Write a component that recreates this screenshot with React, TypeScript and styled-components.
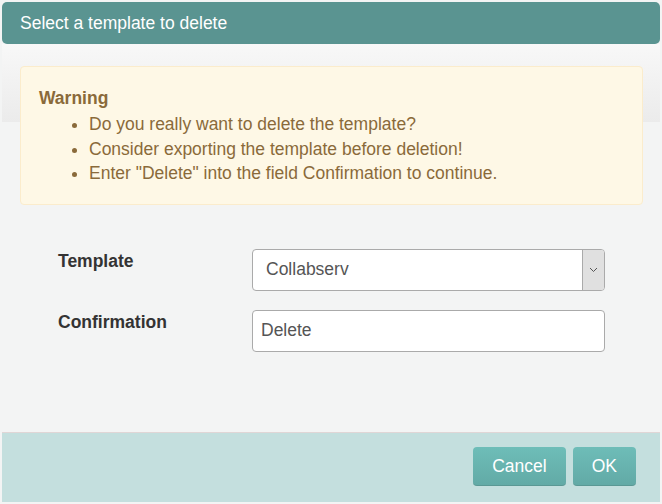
import React from "react";
import styled, { createGlobalStyle } from "styled-components";

const GlobalStyle = createGlobalStyle`
  html, body {
    margin: 0;
    padding: 0;
    background: #f3f4f4;
    font-family: "Liberation Sans", Arial, sans-serif;
  }
`;

const Dialog = styled.div`
  width: 658px;
  padding: 2px;
  display: flex;
  flex-direction: column;
`;

const Header = styled.div`
  height: 42px;
  background: #5a9491;
  border-radius: 5px;
  color: #fff;
  font-size: 17.5px;
  display: flex;
  align-items: center;
  padding-left: 18px;
`;

const Body = styled.div`
  height: 388px;
  box-sizing: border-box;
  padding: 22px 17px 0 18px;
  background: linear-gradient(#f8f8f8, #ebebeb) 0 0 / 100% 78px no-repeat,
    #f3f4f4;
`;

const Warning = styled.div`
  background: #fef8e6;
  border: 1px solid #fbeccc;
  border-radius: 4px;
  padding: 19px 18px 18px 18px;
  color: #8a6a3a;
  font-size: 17.5px;
`;

const WarningTitle = styled.div`
  font-weight: bold;
  line-height: 24px;
`;

const WarningList = styled.ul`
  margin: 2px 0 0 0;
  padding-left: 50px;
  line-height: 24.5px;
`;

const Form = styled.div`
  display: grid;
  grid-template-columns: 194px 353px;
  row-gap: 19px;
  margin: 44px 0 0 38px;
`;

const Label = styled.label`
  font-weight: bold;
  font-size: 17.5px;
  color: #333;
  line-height: 20px;
  padding-top: 2px;
`;

const Field = styled.div`
  height: 42px;
  box-sizing: border-box;
  border: 1px solid #aaa;
  border-radius: 4px;
  background: #fff;
  display: flex;
  align-items: center;
  overflow: hidden;
  font-size: 17.5px;
  color: #555;
`;

const FieldText = styled.span<{ $indent: number }>`
  flex: 1;
  padding-left: ${(p) => p.$indent}px;
`;

const Arrow = styled.div`
  width: 21px;
  align-self: stretch;
  background: #e0e0e0;
  border-left: 1px solid #aaa;
  display: flex;
  align-items: center;
  justify-content: center;
`;

const Footer = styled.div`
  height: 70px;
  box-sizing: border-box;
  border-top: 1px solid #e0d6d6;
  background: #c4dfde;
  display: flex;
  justify-content: flex-end;
  align-items: flex-start;
  gap: 7px;
  padding: 14px 24px 0 0;
`;

const Button = styled.button`
  height: 39px;
  padding: 0 19px;
  border: none;
  border-bottom: 1px solid #5a9894;
  border-radius: 4px;
  background: linear-gradient(#6ebdb8, #62aaa6);
  color: #fff;
  font-family: inherit;
  font-size: 17.5px;
  cursor: pointer;
`;

export default function App() {
  return (
    <>
      <GlobalStyle />
      <Dialog>
        <Header>Select a template to delete</Header>
        <Body>
          <Warning>
            <WarningTitle>Warning</WarningTitle>
            <WarningList>
              <li>Do you really want to delete the template?</li>
              <li>Consider exporting the template before deletion!</li>
              <li>Enter "Delete" into the field Confirmation to continue.</li>
            </WarningList>
          </Warning>
          <Form>
            <Label>Template</Label>
            <Field>
              <FieldText $indent={13}>Collabserv</FieldText>
              <Arrow>
                <svg width="9" height="6" viewBox="0 0 9 6">
                  <path d="M1 1l3.5 3.5L8 1" fill="none" stroke="#555" strokeWidth="1" />
                </svg>
              </Arrow>
            </Field>
            <Label>Confirmation</Label>
            <Field>
              <FieldText $indent={8}>Delete</FieldText>
            </Field>
          </Form>
        </Body>
        <Footer>
          <Button>Cancel</Button>
          <Button>OK</Button>
        </Footer>
      </Dialog>
    </>
  );
}
